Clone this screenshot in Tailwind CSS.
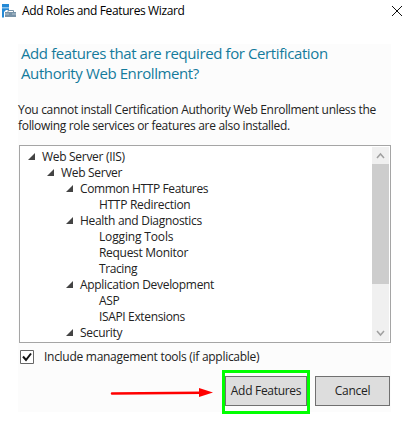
<!DOCTYPE html>
<html lang="en">
<head>
<meta charset="utf-8">
<title>Add Roles and Features Wizard</title>
<script src="https://cdn.jsdelivr.net/npm/@tailwindcss/browser@4"></script>
</head>
<body class="w-[410px] h-[431px] overflow-hidden bg-white font-['Open_Sans',sans-serif] text-[12px] leading-4 text-[#222] whitespace-nowrap">
<header class="flex h-11 items-start justify-between pl-[2px] pr-2">
  <div class="flex">
    <svg class="mt-1 h-[14px] w-[14px]" viewBox="0 0 14 14"><path fill="#2389d6" d="M0 0h7v3.5H0zM0 4.2h7V6H4L2 8v5.5H0z"/><path fill="#7893a8" d="M3 8h11v5H3z"/><path fill="none" stroke="#7893a8" d="M6 8V6.5h5.5V8"/><path stroke="#c3d0da" stroke-width=".8" d="M3 10h4M10 10h4"/></svg>
    <h1 class="ml-[6px] mt-[3px] text-black tracking-[-0.38px]">Add Roles and Features Wizard</h1>
  </div>
  <svg class="mt-[6px] h-[10px] w-[10px]" viewBox="0 0 10 10" fill="none" stroke="#111"><path d="M0 0l10 10M10 0L0 10"/></svg>
</header>
<main class="ml-[18px] h-[368px] w-[373px] bg-[#fcfcfc]">
  <h2 class="h-[58px] pl-[3px] text-[15px] text-[#147b9c] tracking-[-0.4px]"><span class="block h-[19px] leading-[18px]">Add features that are required for Certification</span><span class="block leading-5">Authority Web Enrollment?</span></h2>
  <p class="h-[43px] tracking-[-0.31px]"><span class="block">You cannot install Certification Authority Web Enrollment unless the</span><span class="block">following role services or features are also installed.</span></p>
  <section class="ml-px flex h-[198px] w-[372px] justify-between overflow-hidden border border-[#a5a5a5] bg-white">
    <ul class="pt-[3px] tracking-[-0.3px]">
      <li class="flex pl-2"><svg class="mt-[4px] mr-[7px] h-[7px] w-[7px]" viewBox="0 0 7 7"><path fill="#444" d="M7 0v7H0z"/></svg>Web Server (IIS)</li>
      <li class="flex pl-[27px]"><svg class="mt-[4px] mr-[7px] h-[7px] w-[7px]" viewBox="0 0 7 7"><path fill="#444" d="M7 0v7H0z"/></svg>Web Server</li>
      <li class="flex pl-[46px] tracking-[-0.38px]"><svg class="mt-[4px] mr-[7px] h-[7px] w-[7px]" viewBox="0 0 7 7"><path fill="#444" d="M7 0v7H0z"/></svg>Common HTTP Features</li>
      <li class="pl-[79px]">HTTP Redirection</li>
      <li class="flex pl-[46px]"><svg class="mt-[4px] mr-[7px] h-[7px] w-[7px]" viewBox="0 0 7 7"><path fill="#444" d="M7 0v7H0z"/></svg>Health and Diagnostics</li>
      <li class="pl-[79px] tracking-[-0.15px]">Logging Tools</li>
      <li class="pl-[79px]">Request Monitor</li>
      <li class="pl-[79px] tracking-[-0.4px]">Tracing</li>
      <li class="flex pl-[46px]"><svg class="mt-[4px] mr-[7px] h-[7px] w-[7px]" viewBox="0 0 7 7"><path fill="#444" d="M7 0v7H0z"/></svg>Application Development</li>
      <li class="pl-[79px]">ASP</li>
      <li class="pl-[79px] tracking-[-0.35px]">ISAPI Extensions</li>
      <li class="flex pl-[46px]"><svg class="mt-[4px] mr-[7px] h-[7px] w-[7px]" viewBox="0 0 7 7"><path fill="#444" d="M7 0v7H0z"/></svg>Security</li>
    </ul>
    <div class="my-px mr-px flex w-[17px] flex-col items-center bg-[#f0f0f0]">
      <svg class="h-[17px] w-[17px]" viewBox="0 0 17 17" fill="none" stroke="#a0a0a0" stroke-width="1.5"><path d="M5 11l3.5-4 3.5 4"/></svg>
      <div class="h-[120px] w-full bg-[#cdcdcd]"></div>
      <svg class="mt-auto h-[17px] w-[17px]" viewBox="0 0 17 17" fill="none" stroke="#a0a0a0" stroke-width="1.5"><path d="M5 7l3.5 4L12 7"/></svg>
    </div>
  </section>
  <label class="flex h-[27px] pl-[2px] pt-[6px] tracking-[-0.28px]">
    <svg class="mt-[1px] mr-[10px] h-[14px] w-[14px]" viewBox="0 0 14 14"><path fill="#fff" stroke="#666" d="M.5.5h13v13H.5z"/><path fill="none" stroke="#111" stroke-width="2" d="M3 6.5l3 3.5 5-6.5"/></svg>Include management tools (if applicable)
  </label>
  <div class="flex items-start">
    <svg class="mt-[17px] ml-[92px] h-[11px] w-[103px]" viewBox="0 0 103 11"><path stroke="#f00" stroke-width="2.5" stroke-linecap="round" d="M2 6.5L92 5.8"/><path fill="#f00" d="M89 1l14 4.5L89 10z"/></svg>
    <div class="ml-[9px] h-[44px] w-[88px] border-[3px] border-[#00ff00] bg-[#fcfcfc] pt-[3px]"><button class="block h-[30px] w-[82px] border border-[#707070] bg-[#ddd] tracking-[-0.3px]">Add Features</button></div>
    <button class="mt-[6px] ml-[5px] h-[30px] w-[75px] border border-[#707070] bg-[#ddd] tracking-[-0.3px]">Cancel</button>
  </div>
</main>
</body>
</html>
